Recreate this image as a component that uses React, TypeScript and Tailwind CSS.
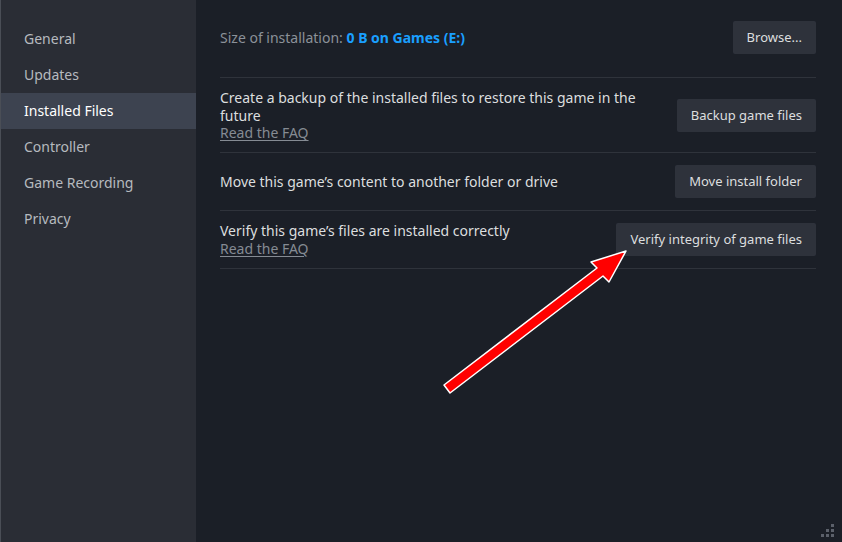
const navItems = ["General", "Updates", "Installed Files", "Controller", "Game Recording", "Privacy"];

function Button({ children }: { children: React.ReactNode }) {
  return (
    <button className="h-[33px] shrink-0 rounded-[2px] bg-[#2e323b] px-[14px] text-[13px] text-[#dcdedf]">
      {children}
    </button>
  );
}

function Faq() {
  return <a className="text-[#858b93] underline underline-offset-[2px]">Read the FAQ</a>;
}

export default function App() {
  return (
    <div
      className="relative flex h-[542px] w-[842px] overflow-hidden bg-[#1b1f27] text-[14px]"
      style={{ fontFamily: '"Noto Sans", "Open Sans", sans-serif' }}
    >
      <nav className="flex w-[196px] shrink-0 flex-col border-l border-[#4a4e56] bg-[#2a2d35] pt-[21px]">
        {navItems.map((item) => (
          <div
            key={item}
            className={
              item === "Installed Files"
                ? "flex h-[36px] items-center bg-[#3d4350] pl-[23px] pb-[1px] text-white"
                : "flex h-[36px] items-center pl-[23px] pb-[1px] text-[#b6babf]"
            }
          >
            {item}
          </div>
        ))}
      </nav>

      <main className="flex flex-1 flex-col pl-[24px] pr-[26px] text-[#dcdedf]">
        <div className="flex items-center justify-between border-b border-[#2f333b] pt-[21px] pb-[23px]">
          <div className="text-[#8b9199]">
            Size of installation: <span className="font-bold text-[#1a9fff]">0 B on Games (E:)</span>
          </div>
          <Button>Browse...</Button>
        </div>

        <div className="flex items-center justify-between gap-6 border-b border-[#2f333b] pt-[11px] pb-[10.5px] leading-[17.5px]">
          <div className="w-[430px]">
            <div>Create a backup of the installed files to restore this game in the future</div>
            <Faq />
          </div>
          <Button>Backup game files</Button>
        </div>

        <div className="flex items-center justify-between border-b border-[#2f333b] py-[12px]">
          <div>Move this game’s content to another folder or drive</div>
          <Button>Move install folder</Button>
        </div>

        <div className="flex items-center justify-between border-b border-[#2f333b] py-[11px] leading-[17.5px]">
          <div>
            <div>Verify this game’s files are installed correctly</div>
            <Faq />
          </div>
          <Button>Verify integrity of game files</Button>
        </div>
      </main>

      <svg className="pointer-events-none absolute left-0 top-0" width="842" height="542">
        <polygon
          points="444,385 597,268 591,262 626,251 609,282 603,276 450,393"
          fill="#ff0000"
          stroke="#ffffff"
          strokeWidth="1.5"
          strokeLinejoin="round"
        />
        <g fill="#5b606a">
          <rect x="831" y="524" width="3" height="3" />
          <rect x="826" y="529" width="3" height="3" />
          <rect x="831" y="529" width="3" height="3" />
          <rect x="821" y="534" width="3" height="3" />
          <rect x="826" y="534" width="3" height="3" />
          <rect x="831" y="534" width="3" height="3" />
        </g>
      </svg>
    </div>
  );
}
